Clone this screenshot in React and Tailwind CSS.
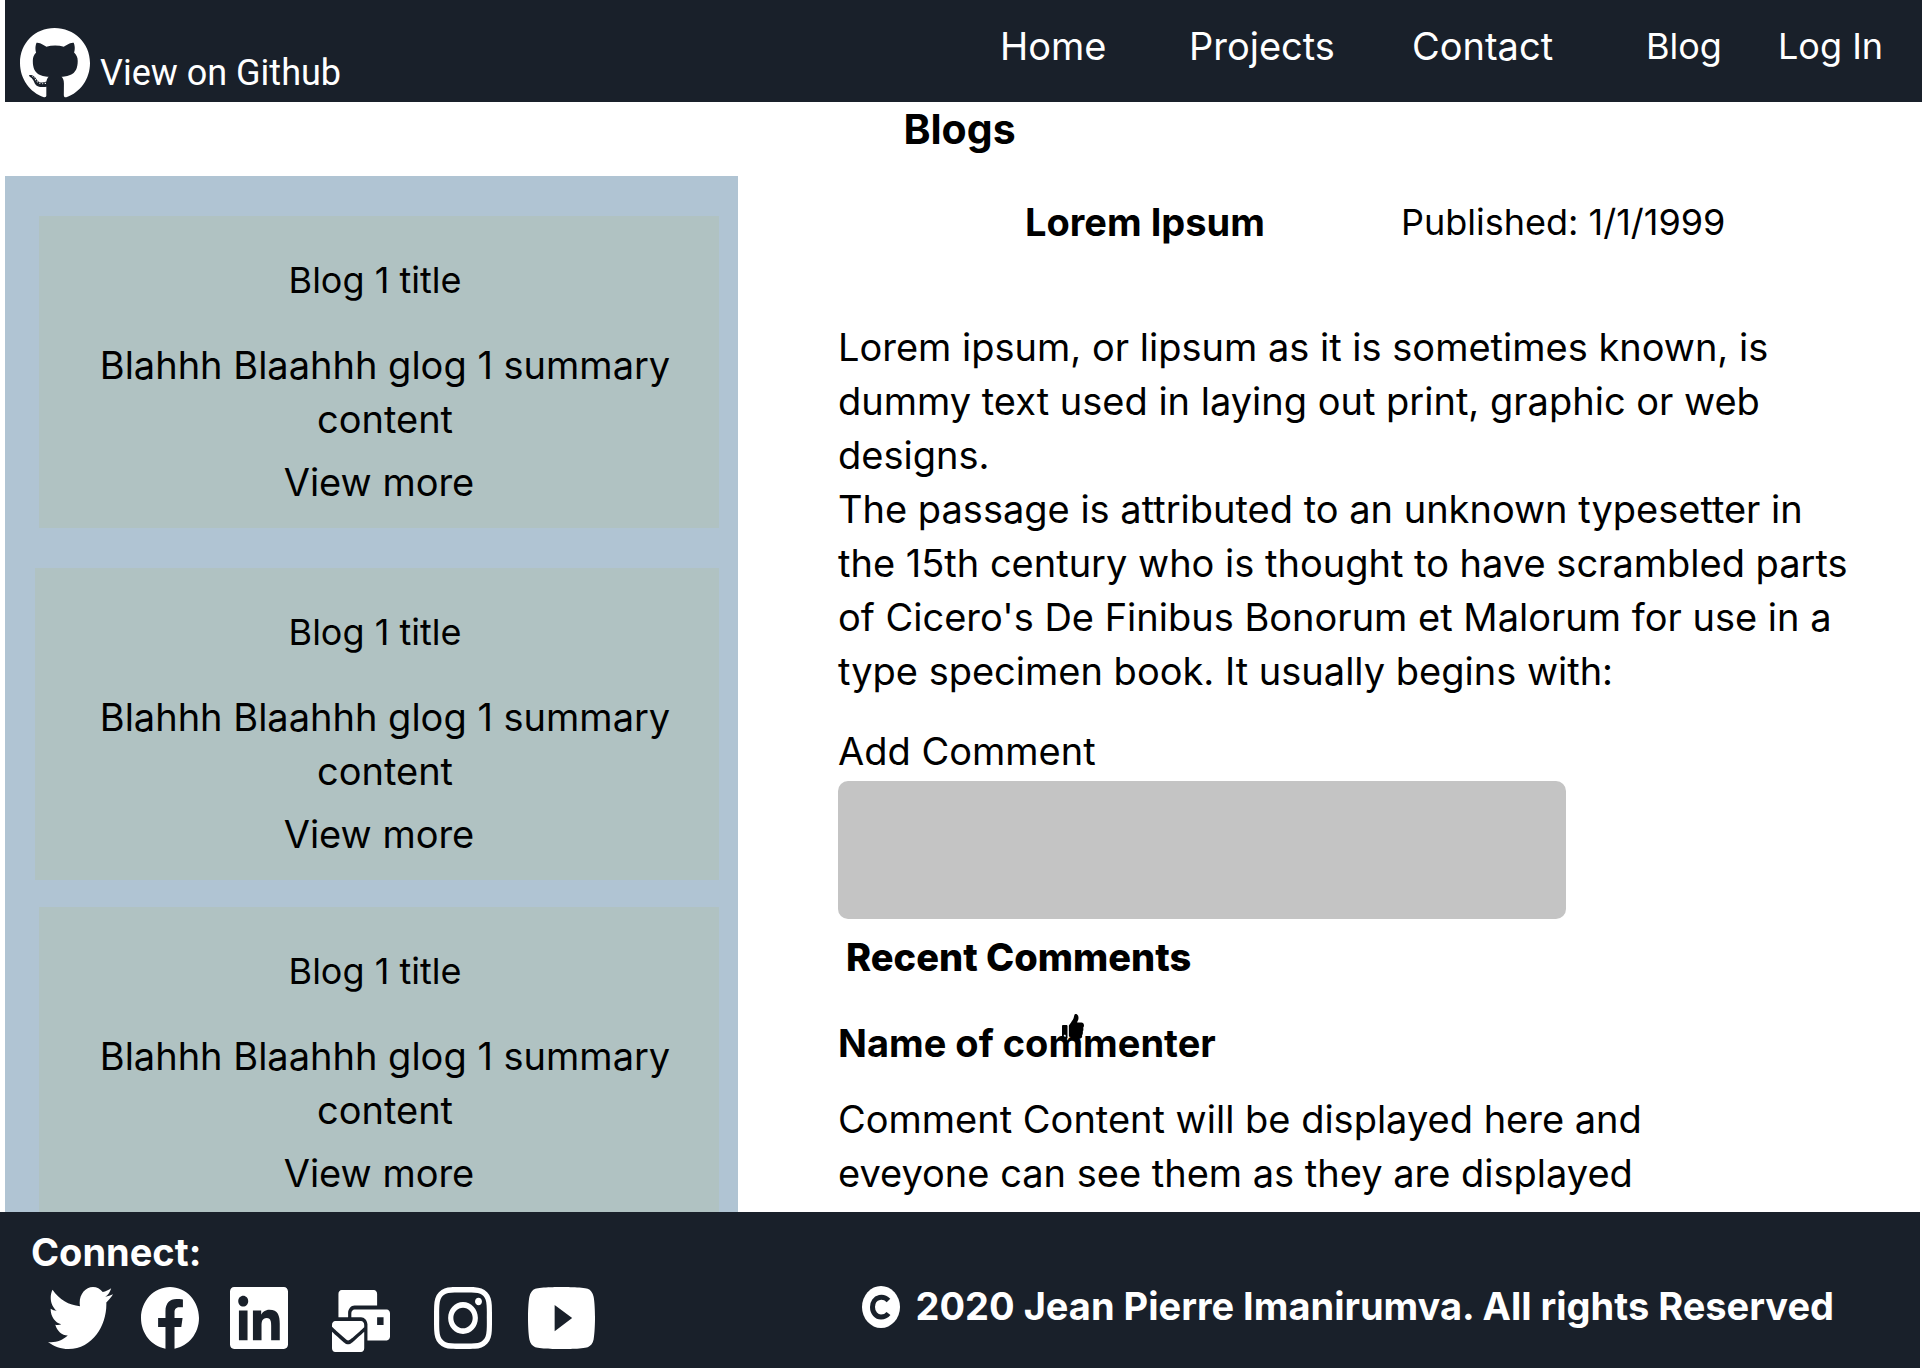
import {
  FaGithub, FaTwitter, FaFacebook, FaLinkedin, FaMailBulk, FaInstagram, FaYoutube, FaThumbsUp,
} from "react-icons/fa";

const posts = [
  { id: 1, card: "ml-[34px] mt-10" },
  { id: 2, card: "ml-[30px] pl-1 mt-10" },
  { id: 3, card: "ml-[34px] mt-[27px]" },
];

const social = [
  { name: "Twitter", Icon: FaTwitter, box: "0 48 512 416", size: "w-[65px] h-[62px] ml-[17px]" },
  { name: "Facebook", Icon: FaFacebook, box: "8 8 496 496", size: "w-[58px] h-[62px] ml-7" },
  { name: "LinkedIn", Icon: FaLinkedin, box: "0 32 448 448", size: "w-[58px] h-[62px] ml-[31px]" },
  { name: "Email", Icon: FaMailBulk, box: "0 0 576 512", size: "w-[58px] h-[62px] ml-11 mt-[3px]" },
  { name: "Instagram", Icon: FaInstagram, box: "0 32 448 448", size: "w-[58px] h-[62px] ml-11" },
  { name: "YouTube", Icon: FaYoutube, box: "15 64 546 384", size: "w-[67px] h-[62px] ml-9" },
];

function Header() {
  return (
    <header className="ml-[5px] flex h-[102px] justify-between bg-[#19202a] text-white">
      <a href="#github" className="ml-[15px] flex pt-7 text-[36px]">
        <FaGithub viewBox="0 8 496 489" preserveAspectRatio="none" className="h-[70px] w-[70px]" />
        <span className="ml-[10px] mt-[18px] font-[Roboto,sans-serif] leading-[54px]">View on Github</span>
      </a>
      <nav className="grid grid-cols-[189px_223px_234px_132px_144px] pt-[19px] text-[38px]">
        <a href="#home">Home</a>
        <a href="#projects">Projects</a>
        <a href="#contact">Contact</a>
        <a href="#blog" className="text-[36px]">Blog</a>
        <a href="#login" className="whitespace-nowrap text-[36px]">Log In</a>
      </nav>
    </header>
  );
}

function PostCard({ card }) {
  return (
    <article className={`mr-[19px] flex h-[312px] shrink-0 flex-col items-center bg-[#b0c2c2] pt-[37px] text-center ${card}`}>
      <h2 className="pr-2 text-[36px]">Blog 1 title</h2>
      <p className="mt-[31px] pl-3">
        Blahhh Blaahhh glog 1 summary<br />content
      </p>
      <a href="#post" className="mt-[9px]">View more</a>
    </article>
  );
}

export default function App() {
  return (
    <div className="flex min-h-screen flex-col bg-white font-[Inter,sans-serif] text-[38px] leading-[54px] text-black">
      <Header />
      <h1 className="pr-[3px] text-center text-[41px] font-bold leading-[54px]">Blogs</h1>
      <main className="mt-5 flex h-[1036px] overflow-hidden">
        <aside className="ml-[5px] flex w-[733px] shrink-0 flex-col bg-[#b0c4d3]">
          {posts.map((p) => <PostCard key={p.id} card={p.card} />)}
        </aside>
        <section className="ml-[100px] flex-1 pt-[19px]">
          <div className="ml-[187px] flex">
            <h2 className="w-[376px] font-bold">Lorem Ipsum</h2>
            <p className="text-[36px]">Published: 1/1/1999</p>
          </div>
          <p className="mt-[71px] whitespace-nowrap">
            Lorem ipsum, or lipsum as it is sometimes known, is<br />
            dummy text used in laying out print, graphic or web<br />
            designs.<br />
            The passage is attributed to an unknown typesetter in<br />
            the 15th century who is thought to have scrambled parts<br />
            of Cicero's De Finibus Bonorum et Malorum for use in a<br />
            type specimen book. It usually begins with:
          </p>
          <label htmlFor="comment" className="mt-[26px] block">Add Comment</label>
          <textarea id="comment" className="mt-[3px] block h-[138px] w-[728px] resize-none rounded-[10px] bg-[#c4c4c4] p-4 outline-none" />
          <h2 className="ml-2 mt-[11px] font-extrabold">Recent Comments</h2>
          <div className="relative mt-8">
            <h3 className="font-bold">Name of commenter</h3>
            <button type="button" aria-label="Like" className="absolute -top-[2px] left-[224px]">
              <FaThumbsUp preserveAspectRatio="none" className="h-[25px] w-[22px]" />
            </button>
          </div>
          <p className="mt-[22px] whitespace-nowrap">
            Comment Content will be displayed here and<br />
            eveyone can see them as they are displayed
          </p>
        </section>
      </main>
      <footer className="mr-[2px] flex h-[156px] justify-between bg-[#19202a] font-bold text-white">
        <div className="ml-[31px] pt-[13px]">
          <h2>Connect:</h2>
          <div className="mt-2 flex">
            {social.map(({ name, Icon, box, size }) => (
              <a key={name} href="#social" aria-label={name}>
                <Icon viewBox={box} preserveAspectRatio="none" className={size} />
              </a>
            ))}
          </div>
        </div>
        <p className="mr-[86px] mt-[67px] flex">
          <svg viewBox="0 0 38 42" className="mr-4 mt-[7px] h-[42px] w-[38px]" aria-hidden="true">
            <ellipse cx="19" cy="21" rx="19" ry="21" fill="white" />
            <path d="M26.5 14.5C23.5 11.5 20 11 17.500 11.5C13 12.5 10.5 16.5 10.5 21C10.5 27 14.5 31 19 31C22 31 24.5 30 26.5 27.5" fill="none" stroke="#19202a" strokeWidth="5" />
          </svg>
          2020 Jean Pierre Imanirumva. All rights Reserved
        </p>
      </footer>
    </div>
  );
}
